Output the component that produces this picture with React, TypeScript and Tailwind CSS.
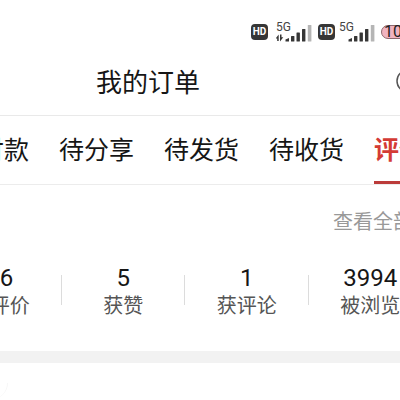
type Tab = {
  key: string;
  label: string;
};

type Stat = {
  label: string;
  value: number;
};

const tabs: Tab[] = [
  { key: "unpaid", label: "付款" },
  { key: "share", label: "待分享" },
  { key: "ship", label: "待发货" },
  { key: "receive", label: "待收货" },
  { key: "review", label: "评价" },
];

const stats: Stat[] = [
  { label: "写评价", value: 16 },
  { label: "获赞", value: 5 },
  { label: "获评论", value: 1 },
  { label: "被浏览", value: 3994 },
];

function HdBadge() {
  return (
    <span className="flex h-4 w-[17px] items-center justify-center rounded-[4px] bg-[#363636] font-['Roboto',sans-serif] text-[10px] leading-none font-bold text-white">
      HD
    </span>
  );
}

function Signal({ active = false }: { active?: boolean }) {
  return (
    <span className="relative block h-[22px] w-9">
      <span className="absolute top-0 left-0 font-['Roboto',sans-serif] text-xs leading-3 text-[#444]">
        5G
      </span>
      <svg viewBox="0 0 36 22" className="h-[22px] w-9" aria-hidden="true">
        {active && (
          <g fill="#363636">
            <path d="M-.5 17.5l3.2-4V20H1.2v-2.5z" />
            <path d="M4 13.5h1.5v2.7h1.8L4 20.5z" />
          </g>
        )}
        <g fill="#363636">
          <path d="M9.5 20.5v-2l3.5-1.5v3.5z" />
          <rect x="15" y="15" width="3.4" height="5.5" rx=".5" />
          <rect x="20.5" y="11.5" width="3.4" height="9" rx=".5" />
          <rect x="26" y="8" width="3.4" height="12.5" rx=".5" />
        </g>
        <rect x="31.8" y="4" width="3.6" height="16.5" rx=".5" fill="#b5b5b5" />
      </svg>
    </span>
  );
}

function StatusBar() {
  return (
    <div className="-mr-4 flex h-12 items-center justify-end pt-4">
      <HdBadge />
      <div className="ml-2">
        <Signal active />
      </div>
      <div className="ml-1.5">
        <HdBadge />
      </div>
      <div className="ml-1">
        <Signal />
      </div>
      <span className="ml-1.5 flex h-3.5 w-[35px] items-center rounded-full border border-[#8d686e] bg-[#f1b3bf] pl-0.5 font-['Roboto',sans-serif] text-base leading-none text-[#222]">
        100
      </span>
    </div>
  );
}

export default function App() {
  return (
    <div className="overflow-hidden bg-white font-['Noto_Sans_CJK_SC',sans-serif] whitespace-nowrap text-[#161616]">
      <StatusBar />

      <header className="-mr-5 flex h-17 items-center justify-between border-b border-[#e9e9e9] pb-0.5 pl-24">
        <h1 className="text-[26px] leading-9">我的订单</h1>
        <button type="button" aria-label="更多">
          <svg viewBox="0 0 24 24" className="size-6" fill="none" stroke="#555" strokeWidth="1.5">
            <circle cx="12" cy="12" r="11" />
            <path d="M7 12h.1M12 12h.1M17 12h.1" strokeWidth="2.5" strokeLinecap="round" />
          </svg>
        </button>
      </header>

      <nav className="border-b border-[#ececec]">
        <div className="-ml-[21px] flex gap-[30px]">
          {tabs.map((tab) => (
            <a
              key={tab.key}
              href={`#${tab.key}`}
              className={
                tab.key === "review"
                  ? "flex h-17 shrink-0 items-center border-b-3 border-[#bb3b3a] text-[25px] font-bold text-[#d43b35]"
                  : "flex h-17 shrink-0 items-center border-b-3 border-transparent text-[25px]"
              }
            >
              {tab.label}
            </a>
          ))}
        </div>
      </nav>

      <section>
        <div className="-mr-[53px] flex justify-end pt-5">
          <a href="#all" className="text-xl leading-8 text-[#999]">
            查看全部评价
          </a>
        </div>
        <dl className="-mr-8 -ml-[62px] grid grid-cols-4 pt-7 pb-8">
          {stats.map((stat) => (
            <div
              key={stat.label}
              className="relative flex flex-col-reverse items-center after:absolute after:top-2.5 after:right-0 after:h-[30px] after:w-px after:bg-[#dcdcdc]"
            >
              <dt className="text-xl leading-7 text-[#555]">{stat.label}</dt>
              <dd className="font-['Roboto',sans-serif] text-2xl leading-[26px]">{stat.value}</dd>
            </div>
          ))}
        </dl>
      </section>

      <div className="h-3 bg-[#f2f2f2]" />

      <section className="pt-5">
        <div className="-ml-2 h-4 w-4 rounded-br-full border-r border-[#f7f7f7]" />
      </section>
    </div>
  );
}
